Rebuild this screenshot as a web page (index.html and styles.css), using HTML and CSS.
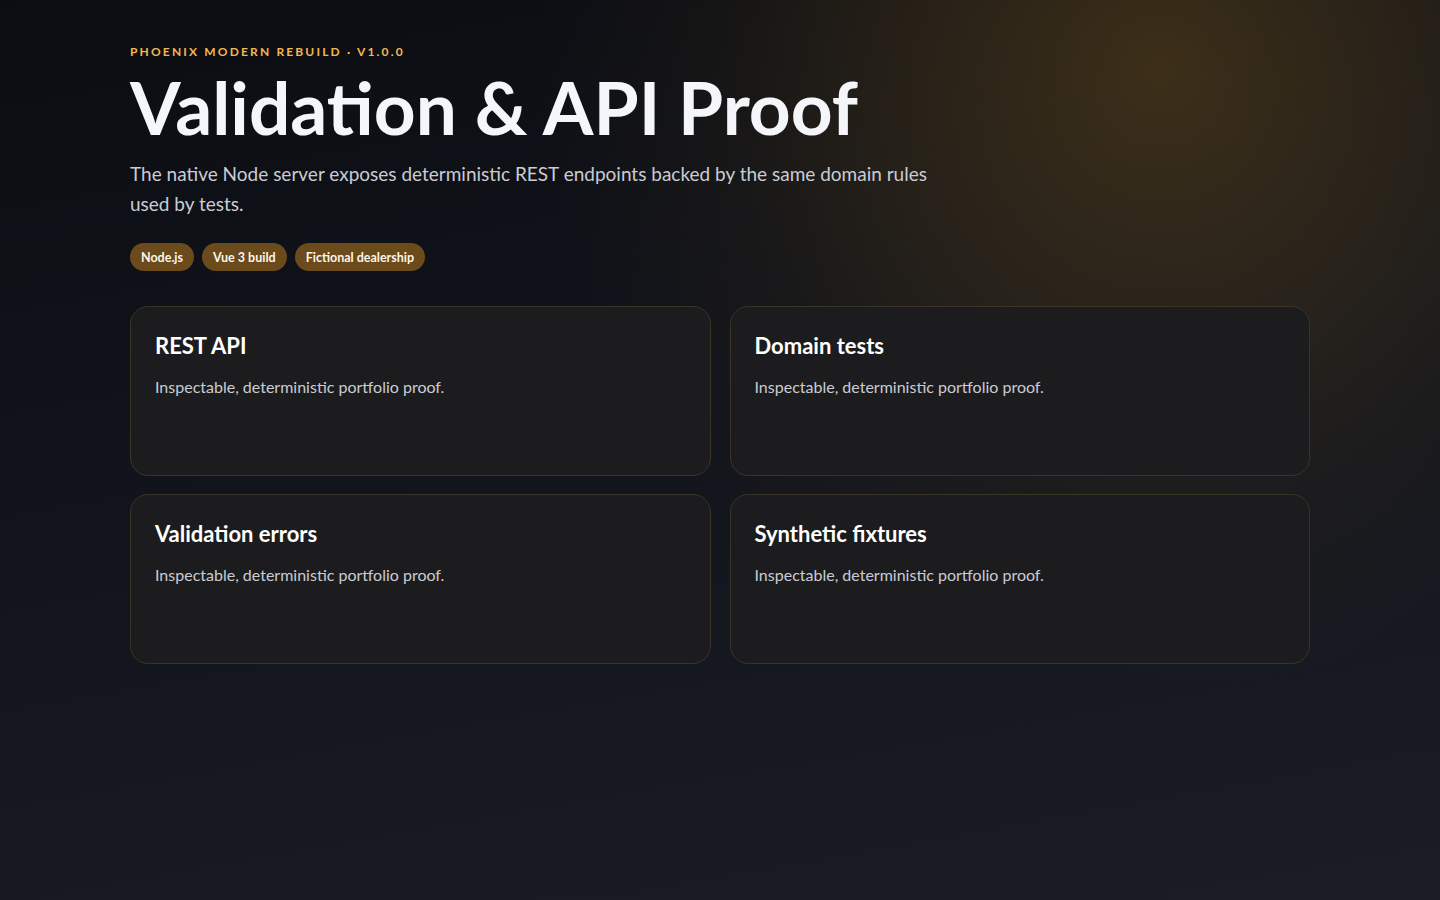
FILE: index.html
```html
<!DOCTYPE html>
<html lang='en'>
<head>
    <meta charset='UTF-8'>
    <meta name='viewport' content='width=device-width, initial-scale=1.0'>
    <title>Validation &amp; API Proof</title>
    <link rel="stylesheet" href="styles.css">
</head>
<body>
    <main class='page'>
        <!-- Hero -->
        <header class='hero'>
            <p class='eyebrow'>Phoenix Modern Rebuild · v1.0.0</p>
            <h1 class='hero-title'>Validation &amp; API Proof</h1>
            <p class='hero-lead'>The native Node server exposes deterministic REST endpoints backed by the same domain rules used by tests.</p>
            <div class='tags'>
                <span class='tag'>Node.js</span>
                <span class='tag'>Vue 3 build</span>
                <span class='tag'>Fictional dealership</span>
            </div>
        </header>

        <!-- Proof cards -->
        <section class='card-grid'>
            <article class='card'>
                <h2 class='card-title'>REST API</h2>
                <p class='card-text'>Inspectable, deterministic portfolio proof.</p>
            </article>
            <article class='card'>
                <h2 class='card-title'>Domain tests</h2>
                <p class='card-text'>Inspectable, deterministic portfolio proof.</p>
            </article>
            <article class='card'>
                <h2 class='card-title'>Validation errors</h2>
                <p class='card-text'>Inspectable, deterministic portfolio proof.</p>
            </article>
            <article class='card'>
                <h2 class='card-title'>Synthetic fixtures</h2>
                <p class='card-text'>Inspectable, deterministic portfolio proof.</p>
            </article>
        </section>
    </main>
</body>
</html>
```

FILE: styles.css
```css
* {
    box-sizing: border-box;
    margin: 0;
    padding: 0;
}

html, body {
    min-height: 100%;
}

body {
    font-family: 'Lato', 'Noto Sans', sans-serif;
    color: #f5f6fa;
    min-height: 100vh;
    background-color: #12151c;
    background-image:
        radial-gradient(circle at 1160px 70px, rgba(120, 86, 28, 0.44) 0, rgba(108, 78, 28, 0.28) 240px, rgba(100, 72, 26, 0.1) 440px, rgba(100, 72, 26, 0) 620px),
        linear-gradient(170deg, #0b0d12 0%, #11141b 45%, #1a1d25 100%);
}

.page {
    max-width: 1180px;
    margin: 0 auto;
    padding: 44px 0 60px;
}

/* Hero */
.eyebrow {
    font-size: 12px;
    font-weight: 700;
    letter-spacing: 0.18em;
    text-transform: uppercase;
    color: #f4b650;
    line-height: 16px;
}

.hero-title {
    font-size: 73px;
    font-weight: 700;
    line-height: 1;
    margin-top: 11px;
    color: #f5f6fa;
}

.hero-lead {
    max-width: 820px;
    margin-top: 15px;
    font-size: 19px;
    line-height: 30px;
    color: #c9ccd4;
}

.tags {
    display: flex;
    gap: 8px;
    margin-top: 24px;
}

.tag {
    display: inline-flex;
    align-items: center;
    height: 28px;
    padding: 0 11px;
    border-radius: 14px;
    background-color: #6b4a1b;
    color: #fdf6e8;
    font-size: 12.5px;
    font-weight: 700;
}

/* Cards */
.card-grid {
    display: grid;
    grid-template-columns: 1fr 1fr;
    gap: 18px 19px;
    margin-top: 35px;
}

.card {
    min-height: 170px;
    padding: 25px 24px 24px;
    background-color: #1c1c1e;
    border: 1px solid #3a3427;
    border-radius: 18px;
}

.card-title {
    font-size: 22px;
    font-weight: 700;
    line-height: 28px;
    color: #ffffff;
}

.card-text {
    margin-top: 15px;
    font-size: 16px;
    line-height: 24px;
    color: #c9ccd4;
}
```
